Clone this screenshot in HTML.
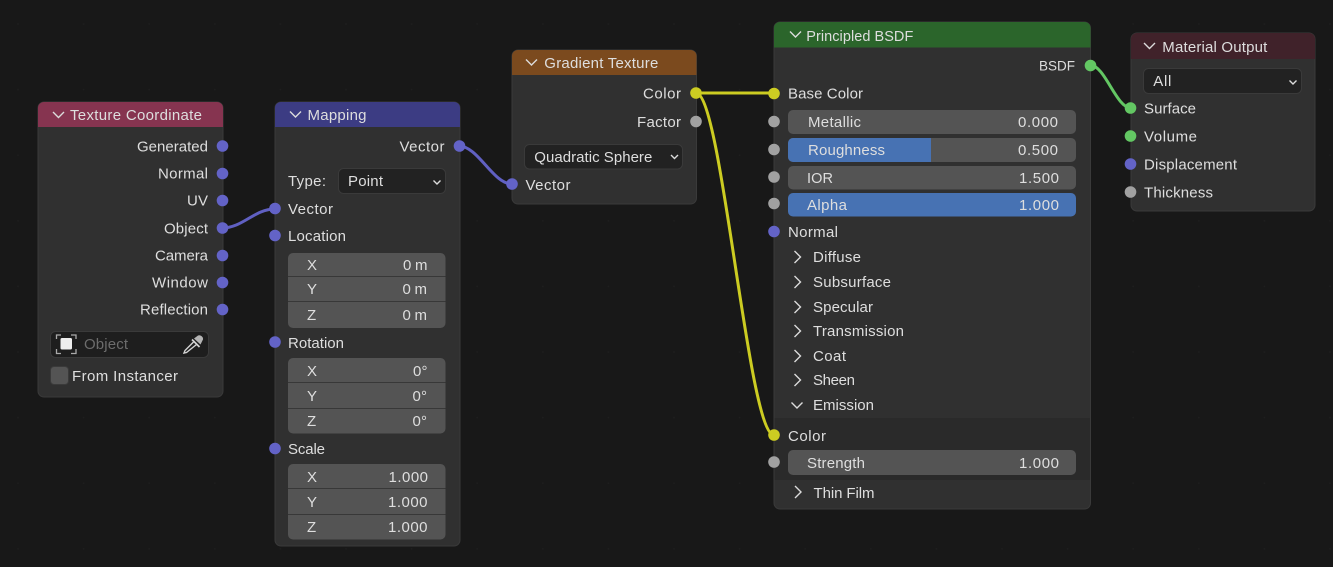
<!DOCTYPE html>
<html><head><meta charset="utf-8"><style>
html,body{margin:0;padding:0;background:#181818;width:1333px;height:567px;overflow:hidden}
svg{display:block;filter:blur(.3px)}
text{font-family:"Liberation Sans",sans-serif;font-size:15px;fill:#dedede}
.e{text-anchor:end}
.n{fill:#303030;stroke:#3a3a3a;stroke-width:1}
.c{fill:none;stroke:#dcdcdc;stroke-width:1.4}
.d{fill:#222;stroke:#3a3a3a;stroke-width:1}
.f{fill:#545454}
.l{stroke:#383838;stroke-width:1}
.pu{fill:#6363c7}.ye{fill:#cccc22}.gy{fill:#a1a1a1}.gr{fill:#63c763}
.pu circle,.ye circle,.gy circle,.gr circle{r:5.8px}
.w{fill:none;stroke-width:3;stroke-linecap:round}
</style></head><body>
<svg width="1333" height="567" viewBox="0 0 1333 567" xmlns="http://www.w3.org/2000/svg">
<defs><pattern id="g" x="17" y="23" width="65.6" height="65.6" patternUnits="userSpaceOnUse"><circle cx="1" cy="1" r=".8" fill="#1f1f1f"/></pattern></defs>
<rect width="1333" height="567" fill="#181818"/>
<rect width="1333" height="567" fill="url(#g)"/>

<!-- Texture Coordinate -->
<rect class="n" x="38" y="102" width="185" height="295" rx="6"/>
<path d="M38 127V108a6 6 0 0 1 6-6H217a6 6 0 0 1 6 6V127Z" fill="#863450"/>
<path class="c" d="M53 112L58.5 117.5L64 112"/>
<text x="70" y="120" textLength="132">Texture Coordinate</text>
<text class="e" x="208" y="151.5" textLength="71">Generated</text>
<text class="e" x="208" y="178.5" textLength="50">Normal</text>
<text class="e" x="208" y="205.5" textLength="21">UV</text>
<text class="e" x="208" y="233.5" textLength="44">Object</text>
<text class="e" x="208" y="260.5" textLength="53">Camera</text>
<text class="e" x="208" y="287.5" textLength="56">Window</text>
<text class="e" x="208" y="314.5" textLength="68">Reflection</text>
<rect x="50.5" y="331.5" width="158" height="26" rx="5" fill="#1e1e1e" stroke="#3a3a3a"/>
<rect x="60.5" y="338" width="11.5" height="11.5" rx="1.5" fill="#eee"/>
<path d="M56.5 339V335H61M71 335H76V339M76 349V353.5H71M61 353.5H56.5V349" fill="none" stroke="#aaa" stroke-width="1.3"/>
<text x="84" y="349" textLength="44" style="fill:#6c6c6c">Object</text>
<path d="M194 338.5L198 335.5C200 334.500 203.500 336.500 203 339.500L200.500 344.500Z" fill="#b4b4b4"/>
<path d="M192 339.5L199.5 347" stroke="#d4d4d4" stroke-width="1.7"/>
<path d="M193.500 342L185 350.5L184 353L186.500 352.500L196.500 344.500" fill="none" stroke="#d4d4d4" stroke-width="1.400"/>
<rect x="50.5" y="366.5" width="18" height="18" rx="3.5" fill="#545454" stroke="#3a3a3a"/>
<text x="72" y="381" textLength="106">From Instancer</text>

<!-- Mapping -->
<rect class="n" x="275" y="102" width="185" height="444" rx="6"/>
<path d="M275 127V108a6 6 0 0 1 6-6H454a6 6 0 0 1 6 6V127Z" fill="#3c3c83"/>
<path class="c" d="M290 111.5L295.5 117L301 111.5"/>
<text x="307.5" y="120" textLength="59">Mapping</text>
<text class="e" x="444.5" y="151.5" textLength="45">Vector</text>
<text x="288" y="186" textLength="38">Type:</text>
<rect class="d" x="338.5" y="168.5" width="107" height="25" rx="5"/>
<text x="348" y="186" textLength="35">Point</text>
<path class="c" d="M433.5 180.5L437 184L440.5 180.5"/>
<text x="288" y="214" textLength="45">Vector</text>
<text x="288" y="241" textLength="58">Location</text>
<rect class="f" x="288" y="253" width="157.5" height="75" rx="5"/>
<path class="l" d="M288 276.5H445.5M288 301.5H445.5"/>
<text x="307" y="270" textLength="10">X</text><text class="e" x="427.5" y="270" textLength="24.5">0 m</text>
<text x="307" y="294" textLength="10">Y</text><text class="e" x="427" y="294" textLength="24.5">0 m</text>
<text x="307" y="320" textLength="10">Z</text><text class="e" x="427" y="320" textLength="24.5">0 m</text>
<text x="288" y="348" textLength="56">Rotation</text>
<rect class="f" x="288" y="358" width="157.5" height="75.5" rx="5"/>
<path class="l" d="M288 382.5H445.5M288 408.5H445.5"/>
<text x="307" y="376" textLength="10">X</text><text class="e" x="427.5" y="376" textLength="14.5">0°</text>
<text x="307" y="401" textLength="10">Y</text><text class="e" x="427" y="401" textLength="14.5">0°</text>
<text x="307" y="426" textLength="10">Z</text><text class="e" x="427" y="426" textLength="14.5">0°</text>
<text x="288" y="454" textLength="37">Scale</text>
<rect class="f" x="288" y="464" width="157.5" height="75.5" rx="5"/>
<path class="l" d="M288 488.5H445.5M288 514.5H445.5"/>
<text x="307" y="482" textLength="10">X</text><text class="e" x="428" y="482" textLength="39.5">1.000</text>
<text x="307" y="507" textLength="10">Y</text><text class="e" x="427.5" y="507" textLength="39.5">1.000</text>
<text x="307" y="532" textLength="10">Z</text><text class="e" x="427.5" y="532" textLength="39.5">1.000</text>

<!-- Gradient Texture -->
<rect class="n" x="512" y="50" width="184.5" height="154" rx="6"/>
<path d="M512 75V56a6 6 0 0 1 6-6H690.5a6 6 0 0 1 6 6V75Z" fill="#7b4a1e"/>
<path class="c" d="M526 59.5L531.5 65L537 59.5"/>
<text x="544.3" y="68" textLength="114">Gradient Texture</text>
<text class="e" x="681" y="98.5" textLength="38">Color</text>
<text class="e" x="681" y="127" textLength="44">Factor</text>
<rect class="d" x="524.5" y="144.5" width="158" height="24.5" rx="5"/>
<text x="534.3" y="162" textLength="118">Quadratic Sphere</text>
<path class="c" d="M671 155L674.5 158.5L678 155"/>
<text x="525.5" y="190" textLength="45">Vector</text>

<!-- Principled BSDF -->
<rect class="n" x="774" y="22" width="316.5" height="487" rx="6"/>
<path d="M774 47.5V28a6 6 0 0 1 6-6H1084.5a6 6 0 0 1 6 6V47.5Z" fill="#2b652b"/>
<path class="c" d="M790 31.5L795.5 37L801 31.5"/>
<text x="806.3" y="41" textLength="107" style="font-size:14.5px">Principled BSDF</text>
<text class="e" x="1075" y="70.5" style="font-size:13.5px">BSDF</text>
<text x="788" y="98.5" textLength="75">Base Color</text>
<rect class="f" x="788" y="110" width="288" height="24" rx="5"/>
<text x="808" y="127" textLength="53">Metallic</text><text class="e" x="1058" y="127" textLength="40">0.000</text>
<rect class="f" x="788" y="138" width="288" height="24" rx="5"/>
<path d="M931 138H793a5 5 0 0 0-5 5V157a5 5 0 0 0 5 5H931Z" fill="#4772b3"/>
<text x="808" y="155" textLength="77">Roughness</text><text class="e" x="1058" y="155" textLength="40">0.500</text>
<rect class="f" x="788" y="166" width="288" height="23.5" rx="5"/>
<text x="807" y="183" textLength="26" style="font-size:14.5px">IOR</text><text class="e" x="1059" y="183" textLength="40">1.500</text>
<rect x="788" y="193" width="288" height="23.5" rx="5" fill="#4772b3"/>
<text x="807" y="210" textLength="40">Alpha</text><text class="e" x="1059" y="210" textLength="40">1.000</text>
<text x="788" y="237" textLength="50">Normal</text>
<path class="c" d="M794.5 251L800.5 257L794.5 263M794.5 276L800.5 282L794.5 288M794.5 301L800.5 307L794.5 313M794.5 325L800.5 331L794.5 337M794.5 350L800.5 356L794.5 362M794.5 374L800.5 380L794.5 386"/>
<text x="813" y="262" textLength="48">Diffuse</text>
<text x="813" y="287" textLength="78">Subsurface</text>
<text x="813" y="312" textLength="60">Specular</text>
<text x="813" y="336" textLength="91">Transmission</text>
<text x="813" y="361" textLength="33">Coat</text>
<text x="813" y="385" textLength="42">Sheen</text>
<path class="c" d="M791.5 402.5L797 408L802.5 402.5"/>
<text x="813" y="410" textLength="61">Emission</text>
<rect x="774.5" y="418" width="315.5" height="62" fill="#2a2a2a"/>
<text x="788" y="441" textLength="38">Color</text>
<rect class="f" x="788" y="450" width="288" height="25" rx="5"/>
<text x="807" y="468" textLength="58">Strength</text><text class="e" x="1059" y="468" textLength="40">1.000</text>
<path class="c" d="M795 486L801 492L795 498"/>
<text x="813.5" y="498" textLength="61">Thin Film</text>

<!-- Material Output -->
<rect class="n" x="1131" y="33" width="184" height="178" rx="6"/>
<path d="M1131 59V39a6 6 0 0 1 6-6H1309a6 6 0 0 1 6 6V59Z" fill="#40222a"/>
<path class="c" d="M1144 43L1149.5 48.5L1155 43"/>
<text x="1162.3" y="52" textLength="105">Material Output</text>
<rect class="d" x="1143.5" y="68.5" width="158" height="25" rx="5"/>
<text x="1153.3" y="86" textLength="18">All</text>
<path class="c" d="M1289.5 80.5L1293 84L1296.5 80.5"/>
<text x="1144" y="113.5" textLength="52">Surface</text>
<text x="1144" y="141.5" textLength="53">Volume</text>
<text x="1144" y="169.5" textLength="93">Displacement</text>
<text x="1144" y="197.5" textLength="69">Thickness</text>

<!-- Wires -->
<path class="w" stroke="#6060c2" d="M222 228C243 228 254 209 275 209"/>
<path class="w" stroke="#6060c2" d="M459 146C478 146 493 184 512 184"/>
<path class="w" stroke="#cccc22" d="M696 93H774"/>
<path class="w" stroke="#cccc22" d="M696 93C722 93 748 435 774 435"/>
<path class="w" stroke="#63c763" d="M1090 65C1105 65 1116 108 1131 108"/>

<!-- Sockets -->
<g class="pu">
<circle cx="222.5" cy="146" r="5.5"/><circle cx="222.5" cy="173.5" r="5.5"/><circle cx="222.5" cy="200.5" r="5.5"/><circle cx="222.5" cy="228" r="5.5"/><circle cx="222.5" cy="255.5" r="5.5"/><circle cx="222.5" cy="282.5" r="5.5"/><circle cx="222.5" cy="309.5" r="5.5"/>
<circle cx="459.5" cy="146" r="5.5"/><circle cx="275" cy="208.5" r="5.5"/><circle cx="275" cy="235.5" r="5.5"/><circle cx="275" cy="342" r="5.5"/><circle cx="275" cy="448.5" r="5.5"/>
<circle cx="512" cy="184" r="5.5"/><circle cx="774" cy="231.5" r="5.5"/><circle cx="1130.5" cy="164" r="5.5"/>
</g>
<g class="ye"><circle cx="696" cy="93" r="5.5"/><circle cx="774" cy="93.5" r="5.5"/><circle cx="774" cy="435" r="5.5"/></g>
<g class="gy"><circle cx="696" cy="121.5" r="5.5"/><circle cx="774" cy="121.5" r="5.5"/><circle cx="774" cy="149.5" r="5.5"/><circle cx="774" cy="177" r="5.5"/><circle cx="774" cy="203.5" r="5.5"/><circle cx="774" cy="462" r="5.5"/><circle cx="1130.5" cy="192" r="5.5"/></g>
<g class="gr"><circle cx="1090.5" cy="65.5" r="5.5"/><circle cx="1130.5" cy="108" r="5.5"/><circle cx="1130.5" cy="136" r="5.5"/></g>
</svg>
</body></html>
